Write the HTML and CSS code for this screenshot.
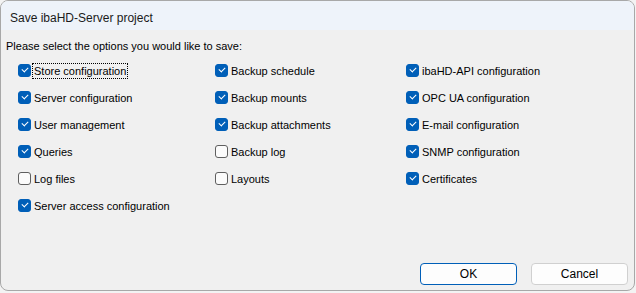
FILE: index.html
```html
<!DOCTYPE html>
<html lang="en">
<head>
  <meta charset="UTF-8">
  <title>Save ibaHD-Server project</title>
  <link rel="stylesheet" href="styles.css">
</head>
<body>
  <div class="window">
    <div class="titlebar">Save ibaHD-Server project</div>
    <div class="content">
      <p class="prompt">Please select the options you would like to save:</p>
      <div class="options">
        <label class="option"><input type="checkbox" checked><span class="box"></span><span class="text focused">Store configuration</span></label>
        <label class="option"><input type="checkbox" checked><span class="box"></span><span class="text">Backup schedule</span></label>
        <label class="option"><input type="checkbox" checked><span class="box"></span><span class="text">ibaHD-API configuration</span></label>

        <label class="option"><input type="checkbox" checked><span class="box"></span><span class="text">Server configuration</span></label>
        <label class="option"><input type="checkbox" checked><span class="box"></span><span class="text">Backup mounts</span></label>
        <label class="option"><input type="checkbox" checked><span class="box"></span><span class="text">OPC UA configuration</span></label>

        <label class="option"><input type="checkbox" checked><span class="box"></span><span class="text">User management</span></label>
        <label class="option"><input type="checkbox" checked><span class="box"></span><span class="text">Backup attachments</span></label>
        <label class="option"><input type="checkbox" checked><span class="box"></span><span class="text">E-mail configuration</span></label>

        <label class="option"><input type="checkbox" checked><span class="box"></span><span class="text">Queries</span></label>
        <label class="option"><input type="checkbox"><span class="box"></span><span class="text">Backup log</span></label>
        <label class="option"><input type="checkbox" checked><span class="box"></span><span class="text">SNMP configuration</span></label>

        <label class="option"><input type="checkbox"><span class="box"></span><span class="text">Log files</span></label>
        <label class="option"><input type="checkbox"><span class="box"></span><span class="text">Layouts</span></label>
        <label class="option"><input type="checkbox" checked><span class="box"></span><span class="text">Certificates</span></label>

        <label class="option"><input type="checkbox" checked><span class="box"></span><span class="text">Server access configuration</span></label>
      </div>
      <div class="buttons">
        <button class="btn default">OK</button>
        <button class="btn">Cancel</button>
      </div>
    </div>
  </div>
</body>
</html>
```

FILE: styles.css
```css
:root {
  --accent: #005fb8;
  --panel: #f0f0f0;
  --title-bg: #eef3fa;
}

body {
  margin: 0;
  background: #f3f3f3;
  font-family: 'Liberation Sans', Arial, sans-serif;
  font-size: 11px;
  color: #000;
}

.window {
  width: 635px;
  height: 291px;
  box-sizing: border-box;
  border: 1px solid #a8a8a8;
  border-radius: 8px;
  overflow: hidden;
  background: var(--panel);
  display: flex;
  flex-direction: column;
}

.titlebar {
  height: 29px;
  background: var(--title-bg);
  padding-left: 9px;
  line-height: 34px;
  font-size: 12px;
  color: #1a1a1a;
  flex-shrink: 0;
}

.content {
  flex: 1;
  display: flex;
  flex-direction: column;
  padding: 0 6px 0 5px;
}

.prompt {
  margin: 9px 0 0;
  line-height: 15px;
}

.options {
  display: grid;
  grid-template-columns: 197px 191px 1fr;
  grid-auto-rows: 27px;
  padding: 3px 0 0 12px;
}

.option {
  display: flex;
  align-items: center;
  gap: 1px;
}

.option input {
  display: none;
}

.box {
  width: 13px;
  height: 13px;
  box-sizing: border-box;
  border-radius: 3px;
  border: 1px solid #5f5f5f;
  background: #fbfbfb;
  flex-shrink: 0;
  position: relative;
}

.option input:checked + .box {
  background: var(--accent);
  border-color: var(--accent);
}

.option input:checked + .box::after {
  content: "";
  position: absolute;
  left: 3px;
  top: 2px;
  width: 5px;
  height: 3px;
  border-left: 1px solid #fff;
  border-bottom: 1px solid #fff;
  transform: rotate(-45deg);
}

.text {
  padding: 0 1px;
  line-height: 14px;
  border: 1px dotted transparent;
}

.text.focused {
  border-color: #000;
}

.buttons {
  margin-top: auto;
  display: flex;
  justify-content: flex-end;
  gap: 14px;
  padding-bottom: 5px;
}

.btn {
  width: 97px;
  height: 22px;
  font-family: inherit;
  font-size: 12px;
  color: #000;
  background: #fdfdfd;
  border: 1px solid #d0d0d0;
  border-radius: 4px;
}

.btn.default {
  border-color: var(--accent);
}
```
